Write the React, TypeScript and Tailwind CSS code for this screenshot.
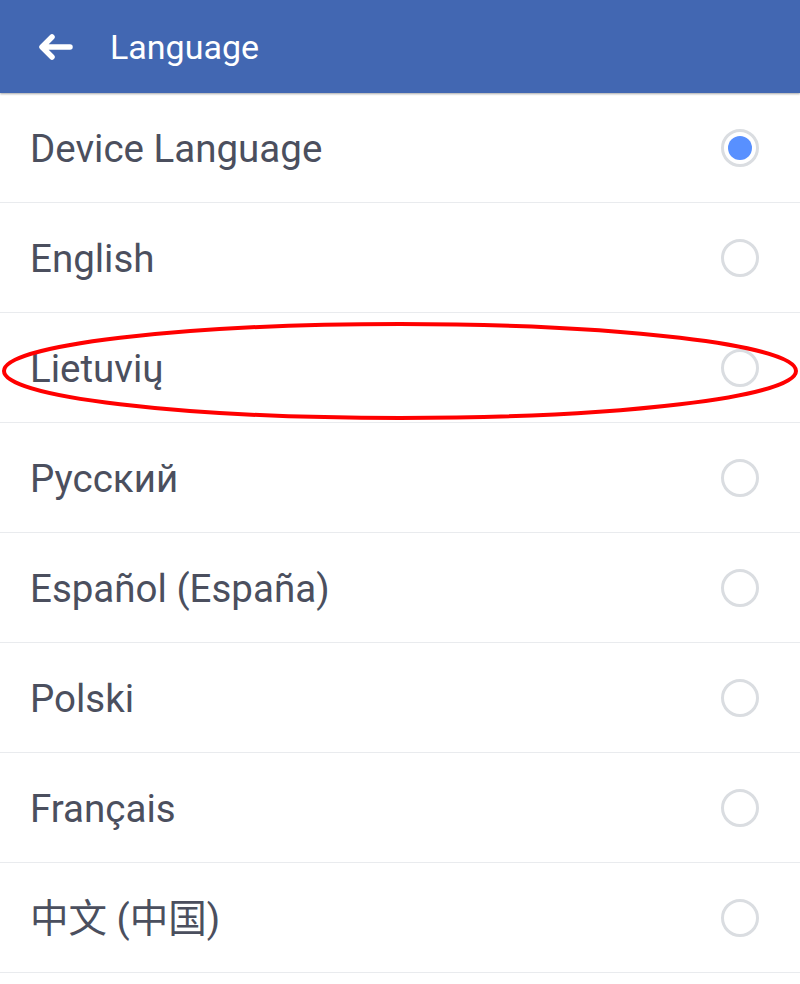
import { useState } from "react";

const LANGS = [
  "Device Language",
  "English",
  "Lietuvių",
  "Русский",
  "Español (España)",
  "Polski",
  "Français",
  "中文 (中国)",
];

function Radio({ checked }: { checked: boolean }) {
  return (
    <div className="w-[38px] h-[38px] rounded-full border-[3px] border-[#dadde1] flex items-center justify-center">
      {checked && <div className="w-[24px] h-[24px] rounded-full bg-[#5890ff]" />}
    </div>
  );
}

export default function App() {
  const [selected, setSelected] = useState(0);

  return (
    <div
      className="relative w-[800px] h-[984px] bg-white overflow-hidden"
      style={{ fontFamily: "Roboto, 'Noto Sans CJK SC', sans-serif" }}
    >
      {/* Header */}
      <div className="h-[93px] bg-[#4267b2] flex items-center shadow-[0_1px_2px_rgba(0,0,0,0.35)] relative z-10">
        <svg width="36" height="28" viewBox="0 0 36 28" className="ml-[37px]">
          <path
            d="M33 14H6M15 4L5 14l10 10"
            fill="none"
            stroke="#fff"
            strokeWidth="5.5"
            strokeLinecap="round"
            strokeLinejoin="round"
          />
        </svg>
        <span className="ml-[37px] text-[34px] text-white leading-none">Language</span>
      </div>

      {/* List */}
      <div>
        {LANGS.map((l, i) => (
          <div
            key={l}
            onClick={() => setSelected(i)}
            className="h-[110px] flex items-center justify-between pl-[30px] pr-[41px] border-b border-[#e9ebee]"
          >
            <span className="text-[38.5px] text-[#4b4f5e] leading-none pt-[4px]">{l}</span>
            <Radio checked={selected === i} />
          </div>
        ))}
      </div>

      {/* Annotation */}
      <svg
        className="absolute left-0 top-[320px] pointer-events-none"
        width="800"
        height="104"
        viewBox="0 0 800 104"
      >
        <ellipse cx="400" cy="51" rx="396" ry="47" fill="none" stroke="#ff0000" strokeWidth="4" />
      </svg>
    </div>
  );
}
